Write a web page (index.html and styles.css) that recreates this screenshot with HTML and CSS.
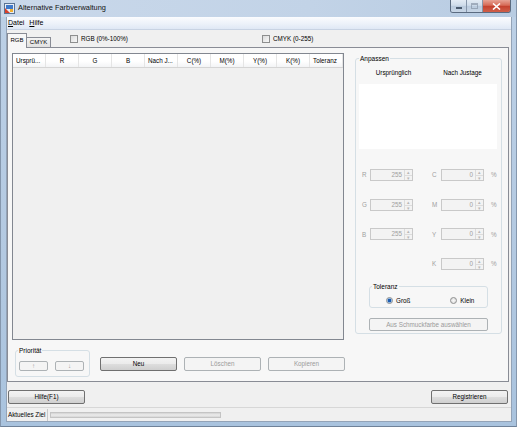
FILE: index.html
```html
<!DOCTYPE html>
<html lang="de">
<head>
    <meta charset="UTF-8">
    <title>Alternative Farbverwaltung</title>
    <link rel="stylesheet" href="styles.css">
</head>
<body>
<div class="window">

    <!-- Title bar -->
    <div class="titlebar">
        <svg class="app-icon" width="11" height="11" viewBox="0 0 11 11">
            <rect x="0.5" y="0.5" width="10" height="10" fill="#e8eef6" stroke="#5a7394"/>
            <rect x="2" y="2" width="7" height="4" fill="#3f78c8"/>
            <polygon points="1,10 1,5 6,10" fill="#d6402c"/>
            <rect x="6" y="6" width="3" height="3" fill="#f0b030"/>
        </svg>
        <span class="title">Alternative Farbverwaltung</span>
        <div class="caption-buttons">
            <div class="cap-btn cap-min"><span></span></div>
            <div class="cap-btn cap-max"><span></span></div>
            <div class="cap-btn cap-close">
                <svg width="9" height="7" viewBox="0 0 9 7"><path d="M1 0.5 L8 6.5 M8 0.5 L1 6.5" stroke="#fff" stroke-width="1.6"/></svg>
            </div>
        </div>
    </div>

    <div class="client">
        <!-- Menu -->
        <div class="menubar">
            <span class="menu-item"><u>D</u>atei</span>
            <span class="menu-item"><u>H</u>ilfe</span>
        </div>

        <!-- Tabs -->
        <div class="tabrow">
            <div class="tab active">RGB</div>
            <div class="tab">CMYK</div>
            <div class="check check-rgb"><span class="box"></span>RGB (0%-100%)</div>
            <div class="check"><span class="box"></span>CMYK (0-255)</div>
        </div>

        <div class="tabpanel">
            <div class="panel-top">
                <div class="grid">
                    <div class="grid-head">
                        <div class="col left">Ursprü...</div>
                        <div class="col">R</div>
                        <div class="col">G</div>
                        <div class="col">B</div>
                        <div class="col left">Nach J...</div>
                        <div class="col">C(%)</div>
                        <div class="col">M(%)</div>
                        <div class="col">Y(%)</div>
                        <div class="col">K(%)</div>
                        <div class="col left">Toleranz</div>
                    </div>
                </div>

                <div class="group adjust">
                    <div class="group-title">Anpassen</div>
                    <div class="preview-head">
                        <span>Ursprünglich</span>
                        <span>Nach Justage</span>
                    </div>
                    <div class="preview"></div>

                    <div class="spin-rows">
                        <div class="spin-row">
                            <span class="lbl">R</span>
                            <div class="spin"><span class="val">255</span><span class="arrows"><i>▴</i><i>▾</i></span></div>
                            <span class="lbl lbl2">C</span>
                            <div class="spin"><span class="val">0</span><span class="arrows"><i>▴</i><i>▾</i></span></div>
                            <span class="pct">%</span>
                        </div>
                        <div class="spin-row">
                            <span class="lbl">G</span>
                            <div class="spin"><span class="val">255</span><span class="arrows"><i>▴</i><i>▾</i></span></div>
                            <span class="lbl lbl2">M</span>
                            <div class="spin"><span class="val">0</span><span class="arrows"><i>▴</i><i>▾</i></span></div>
                            <span class="pct">%</span>
                        </div>
                        <div class="spin-row">
                            <span class="lbl">B</span>
                            <div class="spin"><span class="val">255</span><span class="arrows"><i>▴</i><i>▾</i></span></div>
                            <span class="lbl lbl2">Y</span>
                            <div class="spin"><span class="val">0</span><span class="arrows"><i>▴</i><i>▾</i></span></div>
                            <span class="pct">%</span>
                        </div>
                        <div class="spin-row only-right">
                            <span class="lbl lbl2">K</span>
                            <div class="spin"><span class="val">0</span><span class="arrows"><i>▴</i><i>▾</i></span></div>
                            <span class="pct">%</span>
                        </div>
                    </div>

                    <div class="group tolerance">
                        <div class="group-title">Toleranz</div>
                        <div class="radios">
                            <span class="radio checked"><span class="dot"></span>Groß</span>
                            <span class="radio radio-klein"><span class="dot"></span>Klein</span>
                        </div>
                    </div>

                    <div class="btn disabled spot-btn">Aus Schmuckfarbe auswählen</div>
                </div>
            </div>

            <div class="panel-bottom">
                <div class="group priority">
                    <div class="group-title">Priorität</div>
                    <div class="prio-btns">
                        <div class="btn disabled small">↑</div>
                        <div class="btn disabled small">↓</div>
                    </div>
                </div>
                <div class="btn action">Neu</div>
                <div class="btn disabled action">Löschen</div>
                <div class="btn disabled action">Kopieren</div>
            </div>
        </div>

        <!-- Footer buttons -->
        <div class="footer">
            <div class="btn help">Hilfe(F1)</div>
            <div class="btn register">Registrieren</div>
        </div>

        <!-- Status bar -->
        <div class="statusbar">
            <div class="status-label">Aktuelles Ziel</div>
            <div class="progress"></div>
        </div>
    </div>
</div>
</body>
</html>
```

FILE: styles.css
```css
/* General */
* {
    margin: 0;
    padding: 0;
    box-sizing: border-box;
}
body {
    width: 517px;
    height: 427px;
    overflow: hidden;
    font-family: "Liberation Sans", Arial, sans-serif;
    font-size: 6.5px;
    color: #000;
    background: #b9cde3;
}

/* Window frame */
.window {
    width: 517px;
    height: 427px;
    display: flex;
    flex-direction: column;
    background: linear-gradient(to bottom, #c3d4e7 0%, #bcd0e6 4%, #b3c9e1 60%, #a9c3de 100%);
    border-left: 1px solid #8597ad;
    border-right: 1px solid #8597ad;
    border-bottom: 1px solid #6f8299;
}

/* Title bar */
.titlebar {
    height: 17px;
    display: flex;
    align-items: flex-start;
    background: linear-gradient(to right, #c9d8ea 0%, #c2d3e7 60%, #b8cce2 100%);
}
.app-icon {
    margin: 3px 0 0 3px;
}
.title {
    margin: 4px 0 0 3px;
    font-size: 7.4px;
    line-height: 8px;
    color: #111;
}
.caption-buttons {
    margin-left: auto;
    margin-right: 5px;
    display: flex;
    height: 13px;
    border: 1px solid #5b6b80;
    border-top: none;
    border-radius: 0 0 3px 3px;
    overflow: hidden;
}
.cap-btn {
    height: 12px;
    display: flex;
    align-items: center;
    justify-content: center;
}
.cap-min, .cap-max {
    width: 16px;
    background: linear-gradient(to bottom, #e3ebf4 0%, #cfdcea 45%, #b9cadd 50%, #c8d6e6 100%);
    border-right: 1px solid #8696aa;
}
.cap-min span {
    width: 6px;
    height: 2px;
    margin-top: 4px;
    background: #fff;
    border: 1px solid #4a5a6e;
}
.cap-max span {
    width: 7px;
    height: 6px;
    border: 1px solid #7d8a9c;
    border-top-width: 2px;
    opacity: 0.6;
}
.cap-close {
    width: 27px;
    background: linear-gradient(to bottom, #e7a394 0%, #d66a56 45%, #c4402d 50%, #d0604a 100%);
}

/* Client area */
.client {
    height: 405px;
    margin: 0 4px 0 5px;
    display: flex;
    flex-direction: column;
    background: #f0f0f0;
    border: 1px solid #93a3b7;
    border-top: none;
}

/* Menu bar */
.menubar {
    height: 13px;
    display: flex;
    align-items: center;
    background: linear-gradient(to bottom, #fbfcfe 0%, #eef3fa 50%, #dfe8f5 100%);
    border-bottom: 1px solid #c8d3e3;
    font-size: 7px;
}
.menu-item {
    padding: 0 2px 0 1px;
    margin-right: 2px;
}

/* Tabs */
.tabrow {
    height: 17px;
    display: flex;
    align-items: flex-end;
}
.tab {
    width: 24px;
    height: 10px;
    line-height: 9px;
    text-align: center;
    border: 1px solid #898c95;
    border-bottom: none;
    border-left: none;
    background: linear-gradient(to bottom, #f3f3f3, #e1e1e1);
    font-size: 6px;
}
.tab.active {
    width: 20px;
    height: 15px;
    line-height: 13px;
    margin-bottom: -1px;
    border-left: 1px solid #898c95;
    background: #f7f7f7;
    position: relative;
    z-index: 1;
}
.check {
    display: flex;
    align-items: center;
    align-self: flex-start;
    margin-top: 5px;
    font-size: 6.3px;
    line-height: 8px;
}
.check-rgb {
    margin-left: 19px;
    width: 192px;
}
.check .box {
    width: 8px;
    height: 8px;
    margin-right: 3px;
    border: 1px solid #8e8f8f;
    background: linear-gradient(135deg, #dcdcdc, #f8f8f8);
}

/* Tab panel */
.tabpanel {
    width: 502px;
    height: 336px;
    border: 1px solid #898c95;
    background: #f7f7f7;
    padding: 5px 0 0 4px;
}
.panel-top {
    display: flex;
    height: 287px;
}

/* List grid */
.grid {
    width: 332px;
    height: 287px;
    border: 1px solid #828790;
    background: #f0f0f0;
}
.grid-head {
    display: flex;
    height: 14px;
    background: linear-gradient(to bottom, #ffffff 0%, #ffffff 55%, #f3f4f6 100%);
    border-bottom: 1px solid #d5d5d5;
}
.grid-head .col {
    width: 33px;
    line-height: 13px;
    text-align: center;
    border-right: 1px solid #e5e5e5;
    font-size: 6.3px;
    white-space: nowrap;
    overflow: hidden;
}
.grid-head .col.left {
    text-align: left;
    padding-left: 3px;
}

/* Group boxes */
.group {
    border: 1px solid #d5dfe5;
    border-radius: 3px;
}
.group-title {
    width: max-content;
    margin: -4px 0 0 2px;
    padding: 0 1px;
    line-height: 8px;
    background: #f7f7f7;
    font-size: 6.5px;
}

/* Anpassen */
.adjust {
    width: 147px;
    height: 276px;
    margin: 5px 0 0 11px;
    padding: 0 1px;
}
.preview-head {
    display: flex;
    margin: 4px 0 0 2px;
    height: 12px;
    line-height: 12px;
    font-size: 6.3px;
}
.preview-head span {
    width: 69px;
    text-align: center;
}
.preview {
    width: 138px;
    height: 65px;
    margin: 5px 0 0 2px;
    background: #fff;
}
.spin-rows {
    margin-top: 20px;
    padding-left: 5px;
    display: flex;
    flex-direction: column;
    gap: 17.7px;
}
.spin-row {
    display: flex;
    align-items: center;
    height: 12px;
    color: #a0a0a0;
    font-size: 6.3px;
}
.spin-row.only-right {
    padding-left: 70px;
}
.lbl {
    width: 8px;
}
.lbl2 {
    width: 9px;
    margin-left: 19px;
}
.only-right .lbl2 {
    margin-left: 0;
}
.spin {
    width: 43px;
    height: 12px;
    display: flex;
    border: 1px solid #c9c9c9;
    background: #f3f3f3;
}
.spin .val {
    flex: 1;
    text-align: right;
    line-height: 10px;
    padding-right: 2px;
}
.spin .arrows {
    width: 8px;
    display: flex;
    flex-direction: column;
    border-left: 1px solid #dcdcdc;
}
.spin .arrows i {
    flex: 1;
    font-style: normal;
    font-size: 5px;
    line-height: 5px;
    text-align: center;
    color: #b8b8b8;
}
.spin .arrows i + i {
    border-top: 1px solid #dcdcdc;
}
.pct {
    margin-left: 7px;
}

/* Toleranz */
.tolerance {
    width: 119px;
    height: 22px;
    margin: 16px 0 0 12px;
}
.radios {
    display: flex;
    align-items: center;
    height: 10px;
    margin-top: 5px;
    padding-left: 16px;
    font-size: 6.3px;
}
.radio {
    display: flex;
    align-items: center;
}
.radio-klein {
    margin-left: 40px;
}
.radio .dot {
    width: 7px;
    height: 7px;
    margin-right: 3px;
    border: 1px solid #8e8f8f;
    border-radius: 50%;
    background: radial-gradient(circle, #f8f8f8, #d8d8d8);
}
.radio.checked .dot {
    background: radial-gradient(circle, #1d5db0 0 1.6px, #8fb8e6 2px, #e8eef6 3px);
}

/* Buttons */
.btn {
    height: 14px;
    line-height: 12px;
    text-align: center;
    border: 1px solid #707070;
    border-radius: 2px;
    background: linear-gradient(to bottom, #f3f3f3 0%, #ebebeb 48%, #dddddd 52%, #cfcfcf 100%);
    font-size: 6.3px;
}
.btn.disabled {
    border-color: #adb2b5;
    background: #f4f4f4;
    color: #9a9a9a;
}
.spot-btn {
    width: 119px;
    height: 13px;
    margin: 10px 0 0 12px;
}

/* Panel bottom */
.panel-bottom {
    display: flex;
    align-items: flex-start;
    margin-top: 6px;
}
.priority {
    width: 75px;
    height: 27px;
    margin: 4px 0 0 3px;
}
.prio-btns {
    display: flex;
    gap: 7px;
    margin: 6px 0 0 3px;
}
.btn.small {
    width: 29px;
    height: 10px;
    line-height: 8px;
}
.action {
    width: 77px;
    margin: 11px 0 0 7px;
}
.priority + .action {
    margin-left: 10px;
}

/* Footer */
.footer {
    display: flex;
    justify-content: space-between;
    height: 25px;
    padding: 8px 3px 0 1px;
}
.help, .register {
    width: 77px;
}

/* Status bar */
.statusbar {
    display: flex;
    align-items: center;
    height: 14px;
    border-top: 1px solid #d7d7d7;
    background: #f0f0f0;
}
.status-label {
    width: 41px;
    height: 12px;
    line-height: 12px;
    padding-left: 1px;
    border-right: 1px solid #c8c8c8;
    font-size: 6.3px;
}
.progress {
    width: 171px;
    height: 6px;
    margin-left: 2px;
    border: 1px solid #c4c4c4;
    background: linear-gradient(to bottom, #d2d2d2, #ececec 50%, #d6d6d6);
}
```
